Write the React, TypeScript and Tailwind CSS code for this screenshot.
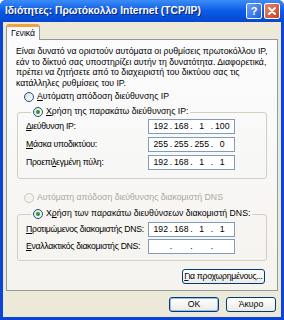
import React from "react";

const Radio = ({ checked, disabled }: { checked?: boolean; disabled?: boolean }) => (
  <span
    className={
      "w-[10px] h-[10px] rounded-full border flex items-center justify-center shrink-0 " +
      (disabled
        ? "border-[#cac8bb] bg-[#f5f4ea]"
        : "border-[#1c5180] bg-linear-to-br from-[#dcdcd7] to-white")
    }
  >
    {checked && <span className="w-[4px] h-[4px] rounded-full bg-[#2b9a2b]" />}
  </span>
);

const IpBox = ({ parts }: { parts: string[] }) => (
  <div className="w-[87px] h-[15px] shrink-0 bg-white border border-[#7f9db9] flex items-center px-[3px] leading-none">
    {parts.map((p, i) => (
      <React.Fragment key={i}>
        <span className="flex-1 text-center">{p}</span>
        {i < 3 && <span className="w-[3px] text-center">.</span>}
      </React.Fragment>
    ))}
  </div>
);

const FieldRow = ({ label, parts }: { label: React.ReactNode; parts: string[] }) => (
  <div className="flex items-center h-[15px]">
    <span className="w-[122px] shrink-0 whitespace-nowrap tracking-[-0.3px]">{label}</span>
    <IpBox parts={parts} />
  </div>
);

const XpButton = ({ children, def }: { children: React.ReactNode; def?: boolean }) => (
  <button
    className={
      "w-full h-[15px] rounded-[3px] border border-[#003c74] bg-linear-to-b from-white to-[#ecebe6] leading-none text-black flex items-center justify-center whitespace-nowrap " +
      (def ? "shadow-[inset_0_0_0_1px_#9bbbf4]" : "")
    }
  >
    {children}
  </button>
);

export default function App() {
  return (
    <div className="w-[284px] h-[320px] flex flex-col bg-[#0a45d8] rounded-t-[6px] overflow-hidden font-['Liberation_Sans',Arial,sans-serif] text-black text-[8.7px]">
      {/* title bar */}
      <div className="h-[22px] shrink-0 flex items-center pl-[5px] pr-[4px] bg-linear-to-b from-[#3c8cf8] via-[#0a5be6] to-[#0747cf]">
        <span className="flex-1 text-white font-bold text-[10.3px] whitespace-nowrap [text-shadow:1px_1px_0_#0a1e6e]">
          Ιδιότητες: Πρωτόκολλο Internet (TCP/IP)
        </span>
        <div className="flex gap-[2px]">
          <div className="w-[16px] h-[16px] rounded-[2px] border border-white bg-linear-to-br from-[#6da0f8] to-[#1d5ddf] flex items-center justify-center text-white font-bold text-[11px] leading-none">
            ?
          </div>
          <div className="w-[16px] h-[16px] rounded-[2px] border border-white bg-linear-to-br from-[#e8866a] to-[#c9401c] flex items-center justify-center">
            <svg width="10" height="10" viewBox="0 0 10 10">
              <path d="M2 2 L8 8 M8 2 L2 8" stroke="white" strokeWidth="2" strokeLinecap="round" />
            </svg>
          </div>
        </div>
      </div>

      {/* body */}
      <div className="flex-1 mx-[3px] mb-[3px] bg-[#ece9d8] flex flex-col px-[3px] pt-[2px]">
        {/* tab */}
        <div className="flex h-[15px]">
          <div className="relative z-10 w-[34px] h-[16px] border border-b-0 border-[#919b9c] rounded-t-[3px] bg-[#fcfcfe] flex items-center justify-center border-t-[3px] border-t-[#f0a33a]">
            Γενικά
          </div>
        </div>

        {/* panel */}
        <div className="h-[252px] border border-[#919b9c] bg-linear-to-b from-[#fcfcfe] to-[#f4f3ee] pt-[6px] px-[9px]">
          <p className="leading-[10.5px] whitespace-nowrap">
            Είναι δυνατό να οριστούν αυτόματα οι ρυθμίσεις πρωτοκόλλου IP,
            <br />
            εάν το δίκτυό σας υποστηρίζει αυτήν τη δυνατότητα. Διαφορετικά,
            <br />
            πρέπει να ζητήσετε από το διαχειριστή του δικτύου σας τις
            <br />
            κατάλληλες ρυθμίσεις του IP.
          </p>

          <div className="mt-[3px] h-[12px] flex items-center gap-[3px] ml-[8px]">
            <Radio />
            <span>
              <u>Α</u>υτόματη απόδοση διεύθυνσης IP
            </span>
          </div>

          <fieldset className="mt-[3px] mx-[1px] border border-[#d0d0bf] rounded-[3px] pl-[8px] pr-0 pb-[8px] pt-[1px] flex flex-col gap-[3px]">
            <legend className="ml-[5px] px-[2px] h-[12px] flex items-center gap-[3px]">
              <Radio checked />
              <span>
                <u>Χ</u>ρήση της παρακάτω διεύθυνσης IP:
              </span>
            </legend>
            <FieldRow
              label={
                <>
                  <u>Δ</u>ιεύθυνση IP:
                </>
              }
              parts={["192", "168", "1", "100"]}
            />
            <FieldRow
              label={
                <>
                  <u>Μ</u>άσκα υποδικτύου:
                </>
              }
              parts={["255", "255", "255", "0"]}
            />
            <FieldRow
              label={
                <>
                  Προεπι<u>λ</u>εγμένη πύλη:
                </>
              }
              parts={["192", "168", "1", "1"]}
            />
          </fieldset>

          <div className="mt-[13px] h-[12px] flex items-center gap-[3px] ml-[8px] text-[#aca899]">
            <Radio disabled />
            <span>Αυτόματη απόδοση διεύθυνσης διακομιστή DNS</span>
          </div>

          <fieldset className="mt-[4px] mx-[1px] border border-[#d0d0bf] rounded-[3px] pl-[8px] pr-0 pb-[6px] pt-[2px] flex flex-col gap-[2px]">
            <legend className="ml-[5px] px-[2px] h-[12px] flex items-center gap-[3px]">
              <Radio checked />
              <span>
                Χ<u>ρ</u>ήση των παρακάτω διευθύνσεων διακομιστή DNS:
              </span>
            </legend>
            <FieldRow
              label={
                <>
                  <u>Π</u>ροτιμώμενος διακομιστής DNS:
                </>
              }
              parts={["192", "168", "1", "1"]}
            />
            <FieldRow
              label={
                <>
                  <u>Ε</u>ναλλακτικός διακομιστής DNS:
                </>
              }
              parts={["", "", "", ""]}
            />
          </fieldset>

          <div className="flex justify-end mt-[8px] mr-[3px]">
            <div className="w-[83px]">
              <XpButton>
                <span className="tracking-[-0.3px]">
                  <u>Γ</u>ια προχωρημένους...
                </span>
              </XpButton>
            </div>
          </div>
        </div>

        {/* dialog buttons */}
        <div className="flex justify-end gap-[7px] mt-[6px] mr-[2px]">
          <div className="w-[50px]">
            <XpButton def>OK</XpButton>
          </div>
          <div className="w-[50px]">
            <XpButton>Άκυρο</XpButton>
          </div>
        </div>
      </div>
    </div>
  );
}
